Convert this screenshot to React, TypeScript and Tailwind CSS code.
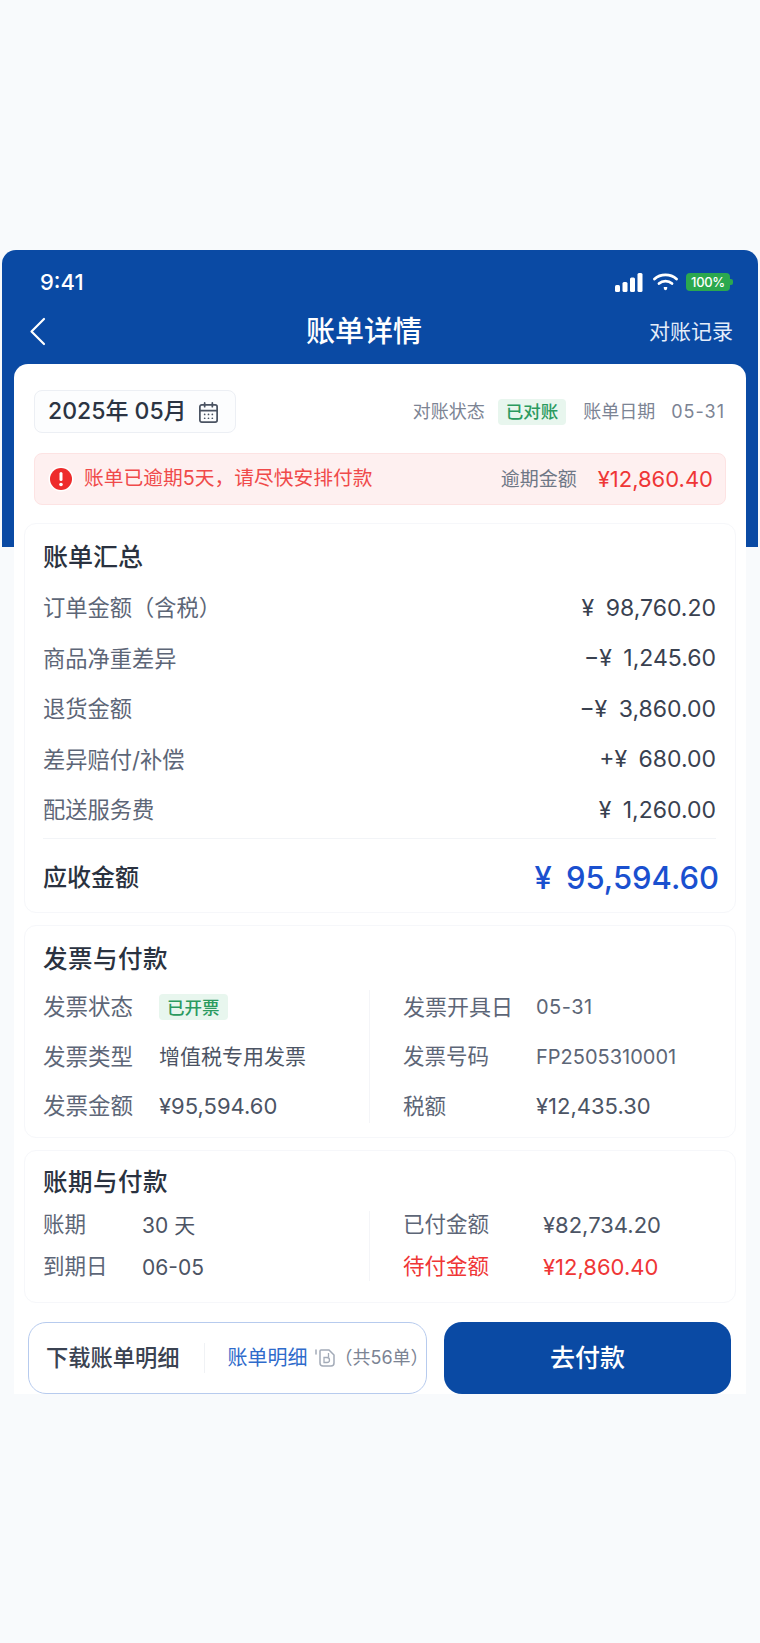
import { CalendarDays } from "lucide-react";

const summaryRows = [
  ["订单金额（含税）", "¥ 98,760.20"],
  ["商品净重差异", "−¥ 1,245.60"],
  ["退货金额", "−¥ 3,860.00"],
  ["差异赔付/补偿", "+¥ 680.00"],
  ["配送服务费", "¥ 1,260.00"],
];

function StatusIcons() {
  return (
    <div className="flex items-center">
      <svg width="28" height="19" viewBox="0 0 28 19" fill="white">
        <rect x="0" y="12" width="5" height="7" rx="1.5" />
        <rect x="7.5" y="9" width="5" height="10" rx="1.5" />
        <rect x="15" y="4.5" width="5" height="14.5" rx="1.5" />
        <rect x="22.5" y="0" width="5" height="19" rx="1.5" />
      </svg>
      <svg className="ml-[10px]" width="25" height="18" viewBox="0 0 25 18" fill="none" stroke="white" strokeWidth="2.8" strokeLinecap="round">
        <path d="M1.5 6 C7.5 .5 17.5 .5 23.5 6" />
        <path d="M6 10.5 C9.5 7.2 15.5 7.2 19 10.5" />
        <circle cx="12.5" cy="15.5" r="1.6" fill="white" stroke="none" />
        <path d="M10.5 14 L12.5 17.5 L14.5 14 Z" fill="white" stroke="none" />
      </svg>
      <div className="ml-[8px] flex h-[18px] w-[44px] items-center justify-center rounded-[4px] bg-[#2ba84e] text-[13px] leading-none font-medium tracking-[-0.3px] text-white">
        100%
      </div>
      <div className="h-[6px] w-[3px] rounded-r-[2px] bg-[#2ba84e]" />
    </div>
  );
}

function Badge({ children }: { children: string }) {
  return (
    <span className="flex h-[26px] items-center rounded-[4px] bg-[#e8f6ee] px-[8px] text-[17.5px] leading-none font-medium text-[#2b9a5f]">
      {children}
    </span>
  );
}

function DocIcon() {
  return (
    <svg width="21" height="20" viewBox="0 0 21 20" fill="none" stroke="#a3abb8" strokeWidth="1.5">
      <path d="M1 2 V6" strokeLinecap="round" />
      <path d="M6 2 H14 L19 7 V15 A3 3 0 0 1 16 18 H8 A3 3 0 0 1 5 15 V3 A1 1 0 0 1 6 2 Z" />
      <path d="M9 9.5 H12 A2.5 2.5 0 0 1 12 14.5 H9 Z M13.5 5 V9" strokeWidth="1.3" />
    </svg>
  );
}

function InfoRow({ label, labelWidth, labelClass = "text-[22.5px] text-[#5d6677]", height, children }: {
  label: string;
  labelWidth: string;
  labelClass?: string;
  height: string;
  children: React.ReactNode;
}) {
  return (
    <div className={`flex items-center ${height}`}>
      <span className={`shrink-0 leading-none whitespace-nowrap ${labelWidth} ${labelClass}`}>{label}</span>
      {children}
    </div>
  );
}

export default function App() {
  return (
    <div className="min-h-[1643px] bg-[#f8fafc] pt-[250px] [font-family:Inter,'Noto_Sans_CJK_SC',sans-serif]">
      <header className="mx-[2px] h-[297px] rounded-t-[14px] bg-[#0a4aa4] text-white">
        <div className="flex h-[64px] items-center justify-between pr-[25px] pl-[38px]">
          <span className="text-[22px] leading-none font-medium">9:41</span>
          <StatusIcons />
        </div>
        <div className="flex h-[34px] items-center pr-[25px] pl-[27px]">
          <div className="w-[277px]">
            <svg width="17" height="29" viewBox="0 0 17 29" fill="none" stroke="white" strokeWidth="2.2" strokeLinecap="round" strokeLinejoin="round">
              <path d="M15 2 L2.5 14.5 L15 27" />
            </svg>
          </div>
          <h1 className="text-[29px] leading-none font-medium">账单详情</h1>
          <span className="ml-auto text-[21px] leading-none text-[#e4edfa]">对账记录</span>
        </div>
      </header>

      <main className="mx-[14px] -mt-[183px] rounded-t-[14px] bg-white pt-[26px]">
        <div className="flex items-center justify-between pr-[21px] pl-[20px]">
          <div className="flex h-[43px] w-[202px] items-center rounded-[8px] border border-[#eceff4] bg-[#fcfdfe] pl-[13px] text-[#2b3443]">
            <span className="text-[23px] leading-none font-medium whitespace-nowrap">2025年 05月</span>
            <CalendarDays size={23} strokeWidth={1.8} className="mt-[2px] ml-[10px] text-[#4a5362]" />
          </div>
          <div className="flex items-center text-[18px] leading-none text-[#7c8494]">
            <span>对账状态</span>
            <span className="ml-[13px]"><Badge>已对账</Badge></span>
            <span className="ml-[17px]">账单日期</span>
            <span className="ml-[16px] tracking-[1px]">05-31</span>
          </div>
        </div>

        <div className="mx-[20px] mt-[20px] flex h-[52px] items-center rounded-[8px] border border-[#fde3e3] bg-[#fef0f0] pr-[12px] pl-[13px]">
          <svg width="26" height="26" viewBox="0 0 26 26">
            <circle cx="13" cy="13" r="12.5" fill="white" />
            <circle cx="13" cy="13" r="11" fill="#ee2b2b" />
            <rect x="11.5" y="6" width="3" height="9" rx="1.5" fill="white" />
            <circle cx="13" cy="18.5" r="1.8" fill="white" />
          </svg>
          <span className="ml-[10px] text-[19.75px] leading-none text-[#f04a4a]">账单已逾期5天，请尽快安排付款</span>
          <span className="ml-auto text-[19px] leading-none text-[#6f7786]">逾期金额</span>
          <span className="ml-[21px] text-[22px] leading-none text-[#ef3636]">¥12,860.40</span>
        </div>

        <section className="mx-[10px] mt-[18px] rounded-[12px] border border-[#f6f7fa] pt-[17px] pr-[19px] pb-[14px] pl-[18px]">
          <h2 className="flex h-[32px] items-center text-[25px] leading-none font-medium text-[#2a3240]">账单汇总</h2>
          <div className="mt-[10px]">
            {summaryRows.map(([label, value]) => (
              <div key={label} className="flex h-[50.5px] items-center justify-between">
                <span className="text-[22.25px] leading-none text-[#5d6677]">{label}</span>
                <span className="text-[23px] leading-none text-[#394150] [word-spacing:5px]">{value}</span>
              </div>
            ))}
          </div>
          <div className="mt-[2px] h-px bg-[#f2f4f7]" />
          <div className="mt-[19px] flex h-[40px] items-center justify-between">
            <span className="text-[24px] leading-none font-medium text-[#2a3240]">应收金额</span>
            <span className="-mr-[3px] text-[31px] leading-none font-medium text-[#1a50cf] [word-spacing:6px]">¥ 95,594.60</span>
          </div>
        </section>

        <section className="mx-[10px] mt-[12px] rounded-[12px] border border-[#f6f7fa] pt-[18px] pr-[19px] pb-[6px] pl-[18px]">
          <h2 className="flex h-[32px] items-center text-[24.5px] leading-none font-medium tracking-[0.5px] text-[#2a3240]">发票与付款</h2>
          <div className="mt-[7px] flex items-center">
            <div className="w-[326px] shrink-0">
              <InfoRow label="发票状态" labelWidth="w-[116px]" height="h-[49.5px]">
                <Badge>已开票</Badge>
              </InfoRow>
              <InfoRow label="发票类型" labelWidth="w-[116px]" height="h-[49.5px]">
                <span className="text-[21px] leading-none text-[#4c5464]">增值税专用发票</span>
              </InfoRow>
              <InfoRow label="发票金额" labelWidth="w-[116px]" height="h-[49.5px]">
                <span className="text-[22px] leading-none text-[#4c5464]">¥95,594.60</span>
              </InfoRow>
            </div>
            <div className="h-[133px] w-px bg-[#f4f5f8]" />
            <div className="ml-[33px]">
              <InfoRow label="发票开具日" labelWidth="w-[133px]" labelClass="text-[22px] text-[#5d6677]" height="h-[49.5px]">
                <span className="text-[20px] leading-none tracking-[0.5px] text-[#5d6677]">05-31</span>
              </InfoRow>
              <InfoRow label="发票号码" labelWidth="w-[133px]" labelClass="text-[21.5px] text-[#5d6677]" height="h-[49.5px]">
                <span className="text-[20px] leading-none text-[#5d6677]">FP2505310001</span>
              </InfoRow>
              <InfoRow label="税额" labelWidth="w-[133px]" labelClass="text-[21.5px] text-[#5d6677]" height="h-[49.5px]">
                <span className="text-[22px] leading-none text-[#4c5464]">¥12,435.30</span>
              </InfoRow>
            </div>
          </div>
        </section>

        <section className="mx-[10px] mt-[12px] rounded-[12px] border border-[#f6f7fa] pt-[15px] pr-[19px] pb-[14px] pl-[18px]">
          <h2 className="flex h-[32px] items-center text-[24.5px] leading-none font-medium tracking-[0.5px] text-[#2a3240]">账期与付款</h2>
          <div className="mt-[6px] flex items-center">
            <div className="w-[326px] shrink-0">
              <InfoRow label="账期" labelWidth="w-[99px]" labelClass="text-[21.5px] text-[#5d6677]" height="h-[42px]">
                <span className="text-[21px] leading-none text-[#4c5464]">30 天</span>
              </InfoRow>
              <InfoRow label="到期日" labelWidth="w-[99px]" labelClass="text-[21.5px] text-[#5d6677]" height="h-[42px]">
                <span className="text-[21px] leading-none text-[#4c5464]">06-05</span>
              </InfoRow>
            </div>
            <div className="h-[70px] w-px bg-[#f4f5f8]" />
            <div className="ml-[33px]">
              <InfoRow label="已付金额" labelWidth="w-[140px]" labelClass="text-[21.5px] text-[#5d6677]" height="h-[42px]">
                <span className="text-[22px] leading-none text-[#4c5464]">¥82,734.20</span>
              </InfoRow>
              <InfoRow label="待付金额" labelWidth="w-[140px]" labelClass="text-[21.5px] text-[#ef3636]" height="h-[42px]">
                <span className="text-[22px] leading-none text-[#ef3636]">¥12,860.40</span>
              </InfoRow>
            </div>
          </div>
        </section>

        <div className="mx-[14px] mt-[19px] flex gap-[17px]">
          <div className="flex h-[72px] w-[399px] items-center rounded-[18px] border-[1.5px] border-[#b7cbee] bg-white pl-[17px] whitespace-nowrap">
            <span className="shrink-0 text-[22.25px] leading-none font-medium text-[#3b4352]">下载账单明细</span>
            <div className="ml-[24px] h-[30px] w-px shrink-0 bg-[#f0f2f5]" />
            <span className="ml-[23px] shrink-0 text-[20px] leading-none text-[#2f6bcb]">账单明细</span>
            <span className="ml-[7px] shrink-0"><DocIcon /></span>
            <span className="ml-[-1px] shrink-0 text-[18px] leading-none text-[#7c8494]">（共56单）</span>
          </div>
          <button className="h-[72px] w-[287px] rounded-[18px] bg-[#0a4aa4] text-[25px] leading-none font-medium text-white">
            去付款
          </button>
        </div>
      </main>
    </div>
  );
}
